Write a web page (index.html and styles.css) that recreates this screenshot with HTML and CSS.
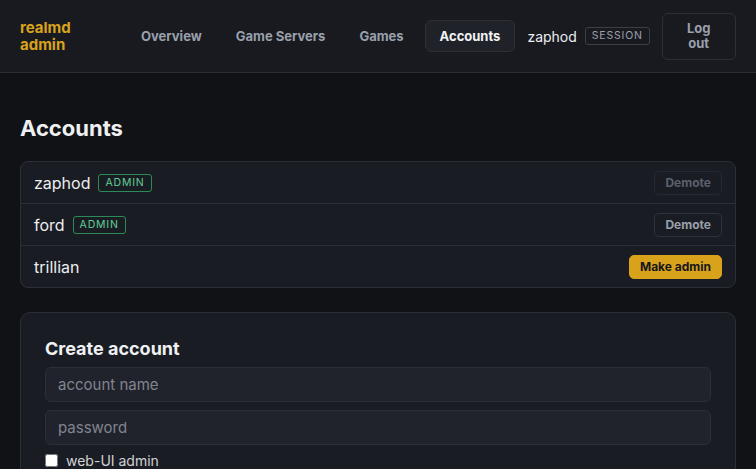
FILE: index.html
```html
<!DOCTYPE html>
<html lang="en">
<head>
<meta charset="utf-8">
<title>realmd admin</title>
<link rel="stylesheet" href="styles.css">
</head>
<body>
<header class="topbar">
  <div class="brand">realmd<br>admin</div>
  <nav class="nav">
    <a class="nav-link">Overview</a>
    <a class="nav-link">Game Servers</a>
    <a class="nav-link">Games</a>
    <a class="nav-link active">Accounts</a>
  </nav>
  <div class="user">
    <span class="user-name">zaphod</span>
    <span class="tag tag-session">SESSION</span>
  </div>
  <button class="logout">Log<br>out</button>
</header>
<main class="main">
  <h1 class="title">Accounts</h1>
  <div class="list">
    <div class="row">
      <span class="acct">zaphod</span><span class="tag tag-admin">ADMIN</span>
      <button class="btn btn-ghost" disabled>Demote</button>
    </div>
    <div class="row">
      <span class="acct">ford</span><span class="tag tag-admin">ADMIN</span>
      <button class="btn btn-ghost">Demote</button>
    </div>
    <div class="row">
      <span class="acct">trillian</span>
      <button class="btn btn-primary">Make admin</button>
    </div>
  </div>
  <section class="card">
    <h2 class="card-title">Create account</h2>
    <input class="field" type="text" placeholder="account name">
    <input class="field" type="password" placeholder="password">
    <label class="check"><input type="checkbox"> web-UI admin</label>
  </section>
</main>
</body>
</html>
```
FILE: styles.css
```css
* { box-sizing: border-box; }
html, body { margin: 0; padding: 0; }
body {
  background: #111216;
  color: #e8e9ec;
  font-family: Inter, "Noto Sans", sans-serif;
  height: 469px;
  overflow: hidden;
}
.topbar {
  height: 73px;
  background: #181a20;
  border-bottom: 1px solid #2a2d35;
  display: flex;
  align-items: center;
  padding: 0 20px;
}
.brand {
  color: #d9a21b;
  font-weight: 700;
  font-size: 15px;
  line-height: 17px;
  width: 108px;
  flex: none;
}
.nav { display: flex; align-items: center; gap: 8px; flex: none; }
.nav-link {
  color: #9aa0ab;
  font-weight: 700;
  font-size: 13px;
  padding: 8px 12px;
  border: 1px solid transparent;
  border-radius: 6px;
  line-height: 14px;
  white-space: nowrap;
}
.nav-link.active {
  color: #f2f3f5;
  background: #1f2229;
  border-color: #2c2f38;
  padding: 8px 14px;
  line-height: 14px;
  height: 32px;
  display: flex;
  align-items: center;
}
.user { display: flex; align-items: center; margin-left: 12px; gap: 8px; flex: none; }
.user-name { font-size: 14px; color: #eceef1; }
.tag {
  font-size: 10.5px;
  letter-spacing: 0.8px;
  border: 1px solid;
  border-radius: 3px;
  padding: 2px 6px;
  line-height: 12px;
}
.tag-session { color: #9aa0ab; border-color: #3a3e48; }
.tag-admin { color: #5fcf95; border-color: #2b8a55; margin-left: 8px; }
.logout {
  margin-left: 12px;
  width: 74px;
  height: 47px;
  flex: none;
  background: transparent;
  border: 1px solid #2c2f38;
  border-radius: 6px;
  color: #9aa0ab;
  font: 700 13px/15px Inter, "Noto Sans", sans-serif;
}
.main { padding: 20px 20px; }
.title {
  font-size: 22px;
  font-weight: 700;
  margin: 21px 0 19px;
  line-height: 28px;
  color: #eff0f2;
}
.list {
  background: #1a1c23;
  border: 1px solid #2c2f38;
  border-radius: 8px;
}
.row {
  height: 42px;
  display: flex;
  align-items: center;
  padding: 0 13px;
  border-top: 1px solid #2c2f38;
}
.row:first-child { border-top: none; height: 41px; }
.acct { font-size: 16px; color: #eceef1; }
.btn {
  margin-left: auto;
  font: 700 12px/14px Inter, "Noto Sans", sans-serif;
  border-radius: 5px;
  height: 24px;
  padding: 0 10px;
}
.btn-ghost {
  background: transparent;
  border: 1px solid #2f323b;
  color: #9aa0ab;
}
.btn-ghost:disabled { color: #5b606b; border-color: #262930; }
.btn-primary {
  background: #d9a21b;
  border: 1px solid #d9a21b;
  color: #16171b;
}
.card {
  margin-top: 24px;
  background: #1a1c23;
  border: 1px solid #2c2f38;
  border-radius: 10px;
  padding: 25px 24px 20px;
}
.card-title {
  margin: 0 0 7px;
  font-size: 18px;
  font-weight: 700;
  line-height: 22px;
  color: #eff0f2;
}
.field {
  display: block;
  width: 100%;
  height: 35px;
  margin-bottom: 8px;
  background: #20232b;
  border: 1px solid #2c2f38;
  border-radius: 6px;
  padding: 0 12px;
  color: #e8e9ec;
  font: 15px Inter, "Noto Sans", sans-serif;
}
.field + .field { margin-bottom: 9px; }
.field::placeholder { color: #80858f; }
.check {
  display: flex;
  align-items: center;
  gap: 8px;
  font-size: 14px;
  line-height: 13px;
  color: #d0d2d6;
}
.check input { margin: 0; width: 13px; height: 13px; }
```
